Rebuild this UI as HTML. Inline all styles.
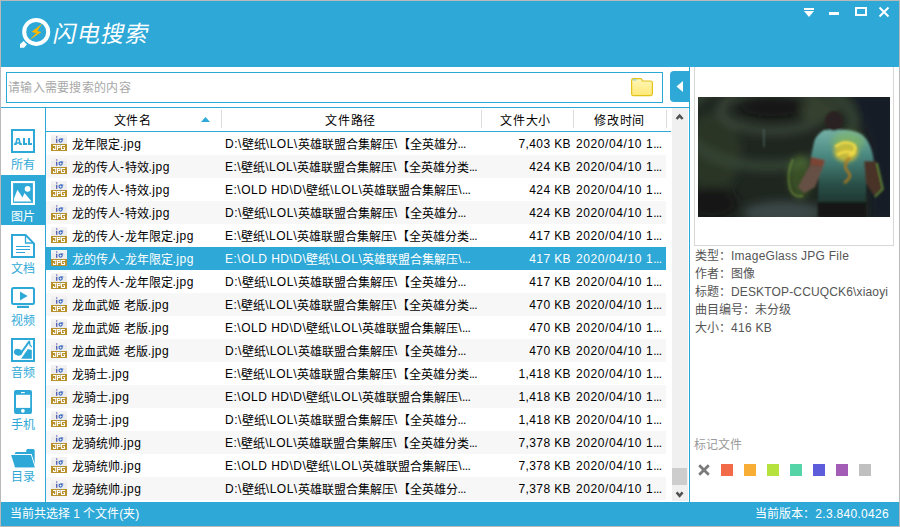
<!DOCTYPE html>
<html lang="zh-CN"><head><meta charset="utf-8">
<style>
*{margin:0;padding:0;box-sizing:border-box}
html,body{width:900px;height:527px;overflow:hidden;background:#fff}
body{position:relative;font-family:"Liberation Sans",sans-serif;font-size:12px;color:#000}
.a{position:absolute}
#win{position:absolute;left:0;top:0;width:900px;height:527px;border:1px solid #b9b9b9;background:#fff}
#title{position:absolute;left:1px;top:1px;width:898px;height:66px;background:#2ea9d7}
.row{position:absolute;left:46px;width:620px;height:23px;background:#fff}
.row.alt{background:#f7f7f7}
.row.sel{background:#2ea9d7;color:#fff}
.row span{position:absolute;top:2px;line-height:23px;white-space:nowrap}
i{font-style:normal}
.c1{left:26px}
.c2{left:179px}
.c3{right:95px;text-align:right}
.c4{left:530px}
.ji{position:absolute;width:16px;height:16px}
.jt{position:absolute;left:0;top:0;width:16px;height:9px;color:#3a6fc0;font-size:8px;line-height:8px;text-align:center}
.jb{position:absolute;left:0;top:9px;width:16px;height:7px;background:#b8902f;color:#fff;font-size:7px;line-height:7px;font-weight:bold;text-align:center}
.side{position:absolute;left:1px;width:44px;height:50px}
.side .lbl{position:absolute;left:0;width:44px;top:35px;text-align:center;color:#2ea9d7;font-size:12px;line-height:14px}
.side.on{background:#2ea9d7}
.side.on .lbl{color:#fff}
.info{position:absolute;left:695px;color:#555;font-size:12px;line-height:18px;white-space:nowrap}
.hd{font-size:12px;line-height:16px;letter-spacing:0.8px}
.sq{position:absolute;top:464px;width:12px;height:12px}
</style></head><body>
<svg width="0" height="0" style="position:absolute"><defs><symbol id="jpg" viewBox="0 0 16 16">
<rect x="0" y="0" width="16" height="9" fill="#ececec"/><rect x="0" y="0" width="16" height="3" fill="#f3f3f3"/>
<rect x="0" y="9" width="16" height="7" fill="#b8912c"/>
<rect x="5.2" y="1.4" width="1.1" height="1.2" fill="#3a3fa8"/><rect x="5.2" y="3.8" width="1.1" height="4" fill="#3a3fa8"/>
<circle cx="9.6" cy="5.6" r="1.6" fill="none" stroke="#2f62c0" stroke-width="1.1"/><rect x="9.6" y="3.5" width="2.6" height="1" fill="#2f62c0"/>
<rect x="8.6" y="9.6" width="1.5" height="0.8" fill="#4aa8d8"/>
<path d="M2 10 H5.5 V11 H5.2 V15 H2 V13 H3 V14 H4.2 V11 H2 Z" fill="#fff"/>
<path d="M6 10 H9.5 V13 H7 V15 H6 Z M7 11 V12 H8.5 V11 Z" fill="#fff" fill-rule="evenodd"/>
<path d="M10 10 H14 V11 H11 V14 H13 V13 H12 V12.2 H14 V15 H10 Z" fill="#fff"/>
</symbol></defs></svg>
<div id="win"></div>
<div id="title"></div>
<!-- logo -->
<svg class="a" style="left:14px;top:14px" width="40" height="40" viewBox="0 0 40 40">
  <circle cx="22.2" cy="17.9" r="12" fill="none" stroke="#fff" stroke-width="4"/>
  <path d="M6 30.3 L9.6 27 L12.9 30.5 L10 33.8 L6 33.8 Z" fill="#fff"/>
  <path d="M28.3 9.5 L17.4 18.1 L22.2 18.9 L15.6 26.1 L27.4 17.9 L23.3 17.1 Z" fill="#f9b700"/>
</svg>
<div id="ttl" class="a" style="left:54px;top:20px;color:#fff;font-size:23px;line-height:28px;font-weight:200;transform:skewX(-12deg);letter-spacing:1px">闪电搜索</div>
<!-- window controls -->
<svg class="a" style="left:800px;top:4px" width="95" height="16" viewBox="800 4 95 16">
  <rect x="804" y="8" width="10" height="2" fill="#fff"/>
  <path d="M804 11 L814 11 L809 17 Z" fill="#fff"/>
  <rect x="829" y="12" width="10" height="3" fill="#fff"/>
  <rect x="856" y="8" width="10" height="7" fill="none" stroke="#fff" stroke-width="2"/>
  <path d="M879.5 7.5 L888.5 16.5 M888.5 7.5 L879.5 16.5" stroke="#fff" stroke-width="2"/>
</svg>
<!-- search -->
<div class="a" style="left:6px;top:72px;width:657px;height:31px;border:1px solid #2ea9d7"></div>
<div class="a" style="left:8px;top:80px;color:#a8a8a8;font-size:12px;line-height:16px;letter-spacing:0.3px">请输入需要搜索的内容</div>
<svg class="a" style="left:631px;top:78px" width="23" height="19" viewBox="0 0 23 19">
  <defs><linearGradient id="fg" x1="0" y1="0" x2="0" y2="1"><stop offset="0" stop-color="#fff7b8"/><stop offset="1" stop-color="#ffe878"/></linearGradient></defs>
  <path d="M0.6 2.4 Q0.6 0.6 2.4 0.6 L9.4 0.6 Q10.4 0.6 10.9 1.6 L11.4 3 L19.6 3 Q21.4 3 21.4 4.8 L21.4 15.8 Q21.4 17.6 19.6 17.6 L2.4 17.6 Q0.6 17.6 0.6 15.8 Z" fill="url(#fg)" stroke="#e3c21c" stroke-width="1.2"/>
  <path d="M1.8 1.9 H5.5" stroke="#6cc6ec" stroke-width="1"/>
</svg>
<div class="a" style="left:670px;top:71px;width:19px;height:31px;background:#2ea9d7;border-radius:4px 0 0 4px"></div>
<svg class="a" style="left:676px;top:81px" width="8" height="11" viewBox="0 0 8 11"><path d="M7 0 L7 11 L0.5 5.5 Z" fill="#fff"/></svg>
<!-- lines -->
<div class="a" style="left:689px;top:67px;width:1px;height:435px;background:#2ea9d7"></div>
<div class="a" style="left:1px;top:107px;width:688px;height:1px;background:#2ea9d7"></div>
<div class="a" style="left:45px;top:108px;width:1px;height:394px;background:#2ea9d7"></div>
<!-- header -->
<div class="a" style="left:46px;top:131px;width:625px;height:1px;background:#2ea9d7"></div>
<div class="a" style="left:221px;top:110px;width:1px;height:18px;background:#dcdcdc"></div>
<div class="a" style="left:481px;top:110px;width:1px;height:18px;background:#dcdcdc"></div>
<div class="a" style="left:573px;top:110px;width:1px;height:18px;background:#dcdcdc"></div>
<div class="a" style="left:666px;top:110px;width:1px;height:18px;background:#dcdcdc"></div>
<div class="a hd" style="left:113.5px;top:113px">文件名</div>
<svg class="a" style="left:201px;top:117px" width="9" height="5" viewBox="0 0 9 5"><path d="M0 5 L4.5 0 L9 5 Z" fill="#2ea9d7"/></svg>
<div class="a hd" style="left:325px;top:113px">文件路径</div>
<div class="a hd" style="left:500px;top:113px">文件大小</div>
<div class="a hd" style="left:594px;top:113px">修改时间</div>
<div class="row" style="top:132px"><svg class="ji" style="left:5px;top:3px" width="16" height="16"><use href="#jpg"/></svg><span class="c1">龙年限定<i style="letter-spacing:0.5px;position:relative;top:-1px">.jpg</i></span><span class="c2"><i style="letter-spacing:0.5px;position:relative;top:-1px">D:\</i>壁纸<i style="letter-spacing:0.5px;position:relative;top:-1px">\LOL\</i>英雄联盟合集解压<i style="letter-spacing:0.5px;position:relative;top:-1px">\</i>【全英雄分<i style="letter-spacing:-0.6px;position:relative;top:-1px">...</i></span><span class="c3"><i style="letter-spacing:0.4px;position:relative;top:-1px">7,403 KB</i></span><span class="c4"><i style="letter-spacing:0.6px;position:relative;top:-1px">2020/04/10 1</i><i style="letter-spacing:-0.6px;position:relative;top:-1px">...</i></span></div><div class="row alt" style="top:155px"><svg class="ji" style="left:5px;top:3px" width="16" height="16"><use href="#jpg"/></svg><span class="c1">龙的传人<i style="letter-spacing:0.5px;position:relative;top:-1px">-</i>特效<i style="letter-spacing:0.5px;position:relative;top:-1px">.jpg</i></span><span class="c2"><i style="letter-spacing:0.5px;position:relative;top:-1px">E:\</i>壁纸<i style="letter-spacing:0.5px;position:relative;top:-1px">\LOL\</i>英雄联盟合集解压<i style="letter-spacing:0.5px;position:relative;top:-1px">\</i>【全英雄分类<i style="letter-spacing:-0.6px;position:relative;top:-1px">...</i></span><span class="c3"><i style="letter-spacing:0.4px;position:relative;top:-1px">424 KB</i></span><span class="c4"><i style="letter-spacing:0.6px;position:relative;top:-1px">2020/04/10 1</i><i style="letter-spacing:-0.6px;position:relative;top:-1px">...</i></span></div><div class="row" style="top:178px"><svg class="ji" style="left:5px;top:3px" width="16" height="16"><use href="#jpg"/></svg><span class="c1">龙的传人<i style="letter-spacing:0.5px;position:relative;top:-1px">-</i>特效<i style="letter-spacing:0.5px;position:relative;top:-1px">.jpg</i></span><span class="c2"><i style="letter-spacing:0.5px;position:relative;top:-1px">E:\OLD HD\D\</i>壁纸<i style="letter-spacing:0.5px;position:relative;top:-1px">\LOL\</i>英雄联盟合集解压<i style="letter-spacing:0.5px;position:relative;top:-1px">\</i><i style="letter-spacing:-0.6px;position:relative;top:-1px">...</i></span><span class="c3"><i style="letter-spacing:0.4px;position:relative;top:-1px">424 KB</i></span><span class="c4"><i style="letter-spacing:0.6px;position:relative;top:-1px">2020/04/10 1</i><i style="letter-spacing:-0.6px;position:relative;top:-1px">...</i></span></div><div class="row alt" style="top:201px"><svg class="ji" style="left:5px;top:3px" width="16" height="16"><use href="#jpg"/></svg><span class="c1">龙的传人<i style="letter-spacing:0.5px;position:relative;top:-1px">-</i>特效<i style="letter-spacing:0.5px;position:relative;top:-1px">.jpg</i></span><span class="c2"><i style="letter-spacing:0.5px;position:relative;top:-1px">D:\</i>壁纸<i style="letter-spacing:0.5px;position:relative;top:-1px">\LOL\</i>英雄联盟合集解压<i style="letter-spacing:0.5px;position:relative;top:-1px">\</i>【全英雄分<i style="letter-spacing:-0.6px;position:relative;top:-1px">...</i></span><span class="c3"><i style="letter-spacing:0.4px;position:relative;top:-1px">424 KB</i></span><span class="c4"><i style="letter-spacing:0.6px;position:relative;top:-1px">2020/04/10 1</i><i style="letter-spacing:-0.6px;position:relative;top:-1px">...</i></span></div><div class="row" style="top:224px"><svg class="ji" style="left:5px;top:3px" width="16" height="16"><use href="#jpg"/></svg><span class="c1">龙的传人<i style="letter-spacing:0.5px;position:relative;top:-1px">-</i>龙年限定<i style="letter-spacing:0.5px;position:relative;top:-1px">.jpg</i></span><span class="c2"><i style="letter-spacing:0.5px;position:relative;top:-1px">E:\</i>壁纸<i style="letter-spacing:0.5px;position:relative;top:-1px">\LOL\</i>英雄联盟合集解压<i style="letter-spacing:0.5px;position:relative;top:-1px">\</i>【全英雄分类<i style="letter-spacing:-0.6px;position:relative;top:-1px">...</i></span><span class="c3"><i style="letter-spacing:0.4px;position:relative;top:-1px">417 KB</i></span><span class="c4"><i style="letter-spacing:0.6px;position:relative;top:-1px">2020/04/10 1</i><i style="letter-spacing:-0.6px;position:relative;top:-1px">...</i></span></div><div class="row sel" style="top:247px"><svg class="ji" style="left:5px;top:3px" width="16" height="16"><use href="#jpg"/></svg><span class="c1">龙的传人<i style="letter-spacing:0.5px;position:relative;top:-1px">-</i>龙年限定<i style="letter-spacing:0.5px;position:relative;top:-1px">.jpg</i></span><span class="c2"><i style="letter-spacing:0.5px;position:relative;top:-1px">E:\OLD HD\D\</i>壁纸<i style="letter-spacing:0.5px;position:relative;top:-1px">\LOL\</i>英雄联盟合集解压<i style="letter-spacing:0.5px;position:relative;top:-1px">\</i><i style="letter-spacing:-0.6px;position:relative;top:-1px">...</i></span><span class="c3"><i style="letter-spacing:0.4px;position:relative;top:-1px">417 KB</i></span><span class="c4"><i style="letter-spacing:0.6px;position:relative;top:-1px">2020/04/10 1</i><i style="letter-spacing:-0.6px;position:relative;top:-1px">...</i></span></div><div class="row" style="top:270px"><svg class="ji" style="left:5px;top:3px" width="16" height="16"><use href="#jpg"/></svg><span class="c1">龙的传人<i style="letter-spacing:0.5px;position:relative;top:-1px">-</i>龙年限定<i style="letter-spacing:0.5px;position:relative;top:-1px">.jpg</i></span><span class="c2"><i style="letter-spacing:0.5px;position:relative;top:-1px">D:\</i>壁纸<i style="letter-spacing:0.5px;position:relative;top:-1px">\LOL\</i>英雄联盟合集解压<i style="letter-spacing:0.5px;position:relative;top:-1px">\</i>【全英雄分<i style="letter-spacing:-0.6px;position:relative;top:-1px">...</i></span><span class="c3"><i style="letter-spacing:0.4px;position:relative;top:-1px">417 KB</i></span><span class="c4"><i style="letter-spacing:0.6px;position:relative;top:-1px">2020/04/10 1</i><i style="letter-spacing:-0.6px;position:relative;top:-1px">...</i></span></div><div class="row alt" style="top:293px"><svg class="ji" style="left:5px;top:3px" width="16" height="16"><use href="#jpg"/></svg><span class="c1">龙血武姬<i style="letter-spacing:0.5px;position:relative;top:-1px"> </i>老版<i style="letter-spacing:0.5px;position:relative;top:-1px">.jpg</i></span><span class="c2"><i style="letter-spacing:0.5px;position:relative;top:-1px">E:\</i>壁纸<i style="letter-spacing:0.5px;position:relative;top:-1px">\LOL\</i>英雄联盟合集解压<i style="letter-spacing:0.5px;position:relative;top:-1px">\</i>【全英雄分类<i style="letter-spacing:-0.6px;position:relative;top:-1px">...</i></span><span class="c3"><i style="letter-spacing:0.4px;position:relative;top:-1px">470 KB</i></span><span class="c4"><i style="letter-spacing:0.6px;position:relative;top:-1px">2020/04/10 1</i><i style="letter-spacing:-0.6px;position:relative;top:-1px">...</i></span></div><div class="row" style="top:316px"><svg class="ji" style="left:5px;top:3px" width="16" height="16"><use href="#jpg"/></svg><span class="c1">龙血武姬<i style="letter-spacing:0.5px;position:relative;top:-1px"> </i>老版<i style="letter-spacing:0.5px;position:relative;top:-1px">.jpg</i></span><span class="c2"><i style="letter-spacing:0.5px;position:relative;top:-1px">E:\OLD HD\D\</i>壁纸<i style="letter-spacing:0.5px;position:relative;top:-1px">\LOL\</i>英雄联盟合集解压<i style="letter-spacing:0.5px;position:relative;top:-1px">\</i><i style="letter-spacing:-0.6px;position:relative;top:-1px">...</i></span><span class="c3"><i style="letter-spacing:0.4px;position:relative;top:-1px">470 KB</i></span><span class="c4"><i style="letter-spacing:0.6px;position:relative;top:-1px">2020/04/10 1</i><i style="letter-spacing:-0.6px;position:relative;top:-1px">...</i></span></div><div class="row alt" style="top:339px"><svg class="ji" style="left:5px;top:3px" width="16" height="16"><use href="#jpg"/></svg><span class="c1">龙血武姬<i style="letter-spacing:0.5px;position:relative;top:-1px"> </i>老版<i style="letter-spacing:0.5px;position:relative;top:-1px">.jpg</i></span><span class="c2"><i style="letter-spacing:0.5px;position:relative;top:-1px">D:\</i>壁纸<i style="letter-spacing:0.5px;position:relative;top:-1px">\LOL\</i>英雄联盟合集解压<i style="letter-spacing:0.5px;position:relative;top:-1px">\</i>【全英雄分<i style="letter-spacing:-0.6px;position:relative;top:-1px">...</i></span><span class="c3"><i style="letter-spacing:0.4px;position:relative;top:-1px">470 KB</i></span><span class="c4"><i style="letter-spacing:0.6px;position:relative;top:-1px">2020/04/10 1</i><i style="letter-spacing:-0.6px;position:relative;top:-1px">...</i></span></div><div class="row" style="top:362px"><svg class="ji" style="left:5px;top:3px" width="16" height="16"><use href="#jpg"/></svg><span class="c1">龙骑士<i style="letter-spacing:0.5px;position:relative;top:-1px">.jpg</i></span><span class="c2"><i style="letter-spacing:0.5px;position:relative;top:-1px">E:\</i>壁纸<i style="letter-spacing:0.5px;position:relative;top:-1px">\LOL\</i>英雄联盟合集解压<i style="letter-spacing:0.5px;position:relative;top:-1px">\</i>【全英雄分类<i style="letter-spacing:-0.6px;position:relative;top:-1px">...</i></span><span class="c3"><i style="letter-spacing:0.4px;position:relative;top:-1px">1,418 KB</i></span><span class="c4"><i style="letter-spacing:0.6px;position:relative;top:-1px">2020/04/10 1</i><i style="letter-spacing:-0.6px;position:relative;top:-1px">...</i></span></div><div class="row alt" style="top:385px"><svg class="ji" style="left:5px;top:3px" width="16" height="16"><use href="#jpg"/></svg><span class="c1">龙骑士<i style="letter-spacing:0.5px;position:relative;top:-1px">.jpg</i></span><span class="c2"><i style="letter-spacing:0.5px;position:relative;top:-1px">E:\OLD HD\D\</i>壁纸<i style="letter-spacing:0.5px;position:relative;top:-1px">\LOL\</i>英雄联盟合集解压<i style="letter-spacing:0.5px;position:relative;top:-1px">\</i><i style="letter-spacing:-0.6px;position:relative;top:-1px">...</i></span><span class="c3"><i style="letter-spacing:0.4px;position:relative;top:-1px">1,418 KB</i></span><span class="c4"><i style="letter-spacing:0.6px;position:relative;top:-1px">2020/04/10 1</i><i style="letter-spacing:-0.6px;position:relative;top:-1px">...</i></span></div><div class="row" style="top:408px"><svg class="ji" style="left:5px;top:3px" width="16" height="16"><use href="#jpg"/></svg><span class="c1">龙骑士<i style="letter-spacing:0.5px;position:relative;top:-1px">.jpg</i></span><span class="c2"><i style="letter-spacing:0.5px;position:relative;top:-1px">D:\</i>壁纸<i style="letter-spacing:0.5px;position:relative;top:-1px">\LOL\</i>英雄联盟合集解压<i style="letter-spacing:0.5px;position:relative;top:-1px">\</i>【全英雄分<i style="letter-spacing:-0.6px;position:relative;top:-1px">...</i></span><span class="c3"><i style="letter-spacing:0.4px;position:relative;top:-1px">1,418 KB</i></span><span class="c4"><i style="letter-spacing:0.6px;position:relative;top:-1px">2020/04/10 1</i><i style="letter-spacing:-0.6px;position:relative;top:-1px">...</i></span></div><div class="row alt" style="top:431px"><svg class="ji" style="left:5px;top:3px" width="16" height="16"><use href="#jpg"/></svg><span class="c1">龙骑统帅<i style="letter-spacing:0.5px;position:relative;top:-1px">.jpg</i></span><span class="c2"><i style="letter-spacing:0.5px;position:relative;top:-1px">E:\</i>壁纸<i style="letter-spacing:0.5px;position:relative;top:-1px">\LOL\</i>英雄联盟合集解压<i style="letter-spacing:0.5px;position:relative;top:-1px">\</i>【全英雄分类<i style="letter-spacing:-0.6px;position:relative;top:-1px">...</i></span><span class="c3"><i style="letter-spacing:0.4px;position:relative;top:-1px">7,378 KB</i></span><span class="c4"><i style="letter-spacing:0.6px;position:relative;top:-1px">2020/04/10 1</i><i style="letter-spacing:-0.6px;position:relative;top:-1px">...</i></span></div><div class="row" style="top:454px"><svg class="ji" style="left:5px;top:3px" width="16" height="16"><use href="#jpg"/></svg><span class="c1">龙骑统帅<i style="letter-spacing:0.5px;position:relative;top:-1px">.jpg</i></span><span class="c2"><i style="letter-spacing:0.5px;position:relative;top:-1px">E:\OLD HD\D\</i>壁纸<i style="letter-spacing:0.5px;position:relative;top:-1px">\LOL\</i>英雄联盟合集解压<i style="letter-spacing:0.5px;position:relative;top:-1px">\</i><i style="letter-spacing:-0.6px;position:relative;top:-1px">...</i></span><span class="c3"><i style="letter-spacing:0.4px;position:relative;top:-1px">7,378 KB</i></span><span class="c4"><i style="letter-spacing:0.6px;position:relative;top:-1px">2020/04/10 1</i><i style="letter-spacing:-0.6px;position:relative;top:-1px">...</i></span></div><div class="row alt" style="top:477px"><svg class="ji" style="left:5px;top:3px" width="16" height="16"><use href="#jpg"/></svg><span class="c1">龙骑统帅<i style="letter-spacing:0.5px;position:relative;top:-1px">.jpg</i></span><span class="c2"><i style="letter-spacing:0.5px;position:relative;top:-1px">D:\</i>壁纸<i style="letter-spacing:0.5px;position:relative;top:-1px">\LOL\</i>英雄联盟合集解压<i style="letter-spacing:0.5px;position:relative;top:-1px">\</i>【全英雄分<i style="letter-spacing:-0.6px;position:relative;top:-1px">...</i></span><span class="c3"><i style="letter-spacing:0.4px;position:relative;top:-1px">7,378 KB</i></span><span class="c4"><i style="letter-spacing:0.6px;position:relative;top:-1px">2020/04/10 1</i><i style="letter-spacing:-0.6px;position:relative;top:-1px">...</i></span></div>
<!-- scrollbar -->
<div class="a" style="left:672px;top:108px;width:16px;height:393px;background:#f0f0f0"></div>
<div class="a" style="left:672px;top:468px;width:15px;height:17px;background:#cdcdcd"></div>
<svg class="a" style="left:672px;top:110px" width="16" height="16" viewBox="0 0 16 16"><path d="M4.6 9 L7.6 5.6 L10.6 9" fill="none" stroke="#505050" stroke-width="2.5"/></svg>
<svg class="a" style="left:672px;top:485px" width="16" height="16" viewBox="0 0 16 16"><path d="M4.6 7.4 L7.6 10.8 L10.6 7.4" fill="none" stroke="#505050" stroke-width="2.5"/></svg>
<!-- sidebar -->
<div class="side" style="top:123px"><svg class="a" style="left:10px;top:6px" width="24" height="24" viewBox="0 0 24 24"><rect x="1" y="1" width="22" height="22" fill="none" stroke="#2ea9d7" stroke-width="2"/><path d="M3 16 L3 14.2 L4.1 14.2 L5.5 9 L8.5 9 L9.9 14.2 L11 14.2 L11 16 L8.3 16 L8.3 14.8 L5.7 14.8 L5.7 16 Z M6 13.2 L8 13.2 L7.4 10.7 L6.6 10.7 Z" fill="#2ea9d7" fill-rule="evenodd"/><path d="M12 9 H14 V14 H16 V16 H12 Z M17 9 H19 V14 H21 V16 H17 Z" fill="#2ea9d7"/></svg><div class="lbl">所有</div></div>
<div class="side on" style="top:175px"><svg class="a" style="left:10px;top:6px" width="24" height="24" viewBox="0 0 24 24"><rect x="1" y="1" width="22" height="22" fill="none" stroke="#fff" stroke-width="2.2"/><path d="M3 17.5 L6.4 8.7 L11.5 16.4 L13.5 12.1 L20.6 20.6 L3 20.6 Z" fill="#fff"/><circle cx="16.6" cy="7.8" r="2.9" fill="#fff"/></svg><div class="lbl">图片</div></div>
<div class="side" style="top:227px"><svg class="a" style="left:10px;top:7px" width="24" height="24" viewBox="0 0 24 24"><path d="M1 1 L14.6 1 L23 9.6 L23 23 L1 23 Z" fill="none" stroke="#2ea9d7" stroke-width="2"/><path d="M14.5 1 V9 H23" fill="none" stroke="#2ea9d7" stroke-width="1.3"/><path d="M5 12.5 H19 M5 15.5 H19 M5 18.5 H14" stroke="#2ea9d7" stroke-width="1.1"/></svg><div class="lbl">文档</div></div>
<div class="side" style="top:279px"><svg class="a" style="left:10px;top:8px" width="24" height="22" viewBox="0 0 24 22"><rect x="1" y="1" width="22" height="16" rx="1.5" fill="none" stroke="#2ea9d7" stroke-width="2"/><path d="M9 4.5 L16.6 9 L9 13.4 Z" fill="#2ea9d7"/><rect x="6" y="18.8" width="12" height="2.2" fill="#2ea9d7"/></svg><div class="lbl">视频</div></div>
<div class="side" style="top:331px"><svg class="a" style="left:10px;top:7px" width="24" height="24" viewBox="0 0 24 24"><rect x="1" y="1" width="22" height="22" fill="none" stroke="#2ea9d7" stroke-width="2"/><ellipse cx="7.2" cy="14.2" rx="4.3" ry="3.4" transform="rotate(15 7.2 14.2)" fill="#2ea9d7"/><path d="M10 15 L18.3 3.4" stroke="#2ea9d7" stroke-width="2"/><path d="M17.5 3 L19 2.6 L19.6 6.5 L21 8.5 L21 9.8 L18.5 7.6 Z" fill="#2ea9d7"/><path d="M10.1 20.8 L16.9 11.1 L20.8 12 L20.8 20.8 Z" fill="#2ea9d7"/></svg><div class="lbl">音频</div></div>
<div class="side" style="top:383px"><svg class="a" style="left:10px;top:7px" width="24" height="24" viewBox="0 0 24 24"><rect x="3" y="0" width="18" height="24" rx="2" fill="#2ea9d7"/><rect x="5" y="4.8" width="14.2" height="13.1" fill="#fff"/><rect x="10" y="2" width="3.8" height="1.1" fill="#fff"/><circle cx="11.9" cy="20.8" r="1.9" fill="#fff"/></svg><div class="lbl">手机</div></div>
<div class="side" style="top:435px"><svg class="a" style="left:10px;top:14px" width="24" height="20" viewBox="0 0 24 20"><path d="M15.2 1.5 Q15.2 0 16.7 0 L22.2 0 Q23.7 0 23.7 1.5 L23.7 18.3 L3.8 18.3 L3.8 4.5 Q3.8 3 5.3 3 L15.2 3 Z" fill="#2ea9d7"/><path d="M3.6 5.6 L20.2 5.6 L24.2 18.3" fill="none" stroke="#fff" stroke-width="1.1"/><path d="M0.1 6.1 L19.8 6.1 L23.7 18.3 L4.1 18.3 Z" fill="#2ea9d7"/></svg><div class="lbl">目录</div></div>
<!-- preview -->
<div class="a" style="left:694px;top:67px;width:200px;height:179px;border:1px solid #d8d8d8;border-top:none"></div>
<svg class="a" style="left:698px;top:97px" width="192" height="120" viewBox="0 0 192 120">
<defs>
<filter id="b5" x="-50%" y="-50%" width="200%" height="200%"><feGaussianBlur stdDeviation="5"/></filter>
<filter id="b3" x="-50%" y="-50%" width="200%" height="200%"><feGaussianBlur stdDeviation="3"/></filter>
<filter id="b2" x="-50%" y="-50%" width="200%" height="200%"><feGaussianBlur stdDeviation="2"/></filter>
<filter id="b1" x="-50%" y="-50%" width="200%" height="200%"><feGaussianBlur stdDeviation="0.9"/></filter>
<linearGradient id="shirt" x1="0" y1="33" x2="0" y2="107" gradientUnits="userSpaceOnUse"><stop offset="0" stop-color="#74b0a6"/><stop offset="0.35" stop-color="#4a8880"/><stop offset="0.7" stop-color="#2c544c"/><stop offset="1" stop-color="#1e3430"/></linearGradient>
<clipPath id="ic"><rect width="192" height="120"/></clipPath>
</defs>
<g clip-path="url(#ic)">
<rect width="192" height="120" fill="#1f2620"/>
<g filter="url(#b5)">
<ellipse cx="15" cy="55" rx="28" ry="40" fill="#2a3628"/>
<ellipse cx="70" cy="25" rx="85" ry="44" fill="none" stroke="#364434" stroke-width="10"/>
<ellipse cx="75" cy="13" rx="52" ry="21" fill="none" stroke="#3c4a3a" stroke-width="7"/>
<ellipse cx="75" cy="11" rx="36" ry="11" fill="#121714"/>
<ellipse cx="122" cy="14" rx="20" ry="12" fill="#34412f"/>
<path d="M152 -5 L200 -5 L200 125 L172 125 L170 45 Z" fill="#171a28"/>
<ellipse cx="85" cy="116" rx="40" ry="12" fill="#3a4646"/>
<ellipse cx="14" cy="106" rx="26" ry="16" fill="#141916"/>
</g>
<rect x="65" y="32" width="1.6" height="18" fill="#5a7272" opacity="0.6" filter="url(#b1)"/>
<ellipse cx="102" cy="80" rx="12" ry="22" fill="#6a9a30" opacity="0.35" filter="url(#b3)"/>
<g filter="url(#b1)">
<path d="M126 33 Q118 38 116 45 L113 60 L121 66 L120 107 L168 107 L168 70 L176 66 Q174 45 163 37 Q152 32 140 33 Z" fill="url(#shirt)"/>
<path d="M113 60 L127 63 L125 70 L112 68 Z" fill="#7a4434"/>
<path d="M112 68 L125 70 L117 90 L106 96 L100 90 Z" fill="#665044"/>
<path d="M166 64 L178 64 L184 92 L176 99 L168 86 Z" fill="#4a3028"/>
<path d="M179 66 L185 92 L177 100" fill="none" stroke="#7ab040" stroke-width="1.4" opacity="0.8"/>
<ellipse cx="136" cy="24" rx="9.5" ry="10" fill="#2a2420"/>
<rect x="120" y="105" width="48" height="15" fill="#151817"/>
</g>
<ellipse cx="150" cy="45" rx="16" ry="10" fill="#90c040" opacity="0.45" filter="url(#b3)"/>
<ellipse cx="148" cy="55" rx="12" ry="10" fill="#d8c030" opacity="0.85" filter="url(#b2)"/>
<path d="M137 50 Q147 42 156 48 Q160 54 150 60 M139 58 Q148 52 157 57" fill="none" stroke="#f2dc48" stroke-width="2.5" filter="url(#b1)"/>
<path d="M152 60 Q144 68 150 75 Q155 80 146 86" fill="none" stroke="#b07a20" stroke-width="3" opacity="0.8" filter="url(#b1)"/>
<path d="M95 62 Q88 76 92 92 Q96 101 105 99" fill="none" stroke="#a0d050" stroke-width="1.3" opacity="0.55" filter="url(#b1)"/>
</g>
</svg>
<div class="info" style="top:247px">类型：<i style="letter-spacing:0.25px">ImageGlass JPG File</i></div>
<div class="info" style="top:265px">作者：图像</div>
<div class="info" style="top:283px">标题：<i style="letter-spacing:0.15px">DESKTOP-CCUQCK6\xiaoyi</i></div>
<div class="info" style="top:301px">曲目编号：未分级</div>
<div class="info" style="top:319px">大小：<i style="letter-spacing:0.3px">416 KB</i></div>
<div class="info" style="top:436px;left:694px;color:#9a9a9a">标记文件</div>
<svg class="a" style="left:698px;top:464px" width="12" height="12" viewBox="0 0 12 12"><path d="M1.2 1.2 L10.8 10.8 M10.8 1.2 L1.2 10.8" stroke="#7a7a7a" stroke-width="2.8"/></svg>
<div class="sq" style="left:721px;background:#f26a48"></div>
<div class="sq" style="left:744px;background:#f8ad36"></div>
<div class="sq" style="left:767px;background:#b5e23c"></div>
<div class="sq" style="left:790px;background:#55d4a8"></div>
<div class="sq" style="left:813px;background:#5d5ddc"></div>
<div class="sq" style="left:836px;background:#a35db7"></div>
<div class="sq" style="left:859px;background:#c0c0c0"></div>
<!-- status -->
<div class="a" style="left:1px;top:502px;width:898px;height:24px;background:#2ea9d7;color:#fff"></div>
<div class="a" style="left:10px;top:506px;color:#fff;line-height:16px">当前共选择 1 个文件(夹)</div>
<div class="a" style="right:11px;top:506px;color:#fff;line-height:16px">当前版本：<i style="letter-spacing:0.3px">2.3.840.0426</i></div>
</body></html>
